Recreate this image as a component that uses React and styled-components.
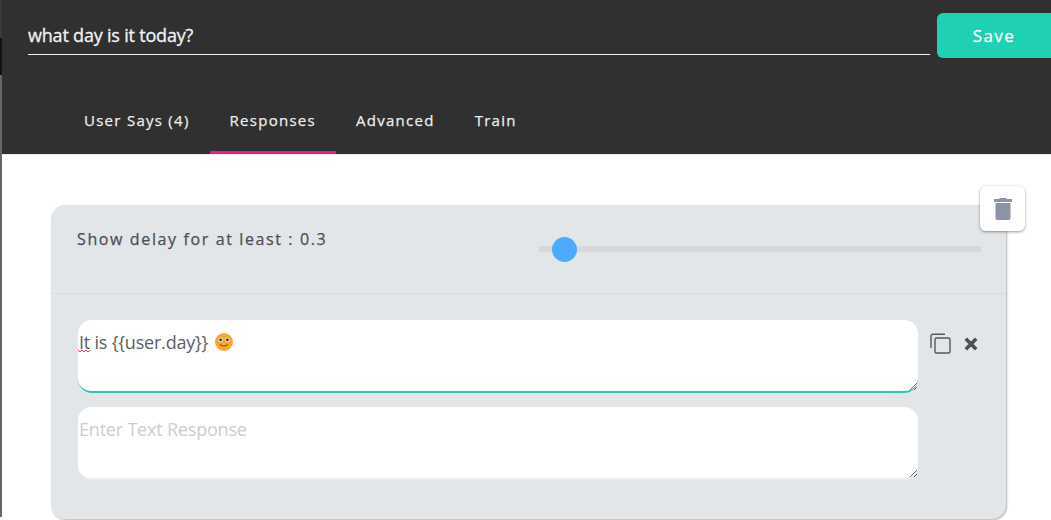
import React from "react";
import styled, { createGlobalStyle } from "styled-components";

const Global = createGlobalStyle`
  html, body {
    margin: 0;
    padding: 0;
    background: #fff;
    overflow: hidden;
  }
  body {
    font-family: "Open Sans", "Noto Sans", sans-serif;
  }
  * {
    box-sizing: border-box;
  }
`;

const Page = styled.div`
  width: 1051px;
  height: 520px;
  display: flex;
  overflow: hidden;
`;
const Gutter = styled.div`
  width: 2px;
  flex: none;
  background: linear-gradient(
    to bottom,
    #3a3a3a 0,
    #3a3a3a 38px,
    #141414 38px,
    #141414 75px,
    #666 75px,
    #666 517px,
    #fff 517px
  );
`;
const Main = styled.div`
  flex: 1;
  min-width: 0;
`;
const Header = styled.header`
  height: 155px;
  background: #303030;
  display: flex;
  flex-direction: column;
  border-bottom: 1px solid #e6e6e6;
`;
const TitleRow = styled.div`
  display: flex;
  align-items: flex-start;
  gap: 7px;
  padding: 13px 0 0 26px;
`;
const TitleInput = styled.input`
  width: 902px;
  height: 42px;
  padding: 2px 0 0;
  background: transparent;
  border: none;
  border-bottom: 1px solid #f0f0f0;
  outline: none;
  color: #f2f2f2;
  font-family: inherit;
  font-size: 18px;
  letter-spacing: -0.2px;
  -webkit-text-stroke: 0.3px #f2f2f2;
`;
const SaveButton = styled.button`
  width: 114px;
  height: 45px;
  flex: none;
  border: none;
  border-radius: 6px 0 0 6px;
  background: #20d0b2;
  color: #fff;
  font-family: inherit;
  font-size: 17px;
  letter-spacing: 1.4px;
  -webkit-text-stroke: 0.3px #fff;
`;
const Tabs = styled.nav`
  display: flex;
  margin-top: auto;
  padding-left: 62px;
`;
const Tab = styled.div`
  height: 58px;
  padding: 0 20px 8px;
  display: flex;
  align-items: center;
  color: #eeeeee;
  font-size: 15px;
  letter-spacing: 1.27px;
  -webkit-text-stroke: 0.25px #eeeeee;
  border-bottom: 3px solid ${(p) => (p.$active ? "#e91e8c" : "transparent")};
`;
const Content = styled.div`
  padding: 50px 0 0 49px;
`;
const Card = styled.section`
  position: relative;
  width: 955px;
  height: 314px;
  background: #e3e6e9;
  border-radius: 14px;
  box-shadow: 1px 1px 2px rgba(0, 0, 0, 0.3);
`;
const DeleteButton = styled.button`
  position: absolute;
  top: -19px;
  right: -19px;
  width: 45px;
  height: 45px;
  padding: 0;
  display: flex;
  align-items: center;
  justify-content: center;
  border: none;
  border-radius: 6px;
  background: #fff;
  box-shadow: 0 1px 3px rgba(0, 0, 0, 0.4);
`;
const DelayRow = styled.div`
  height: 89px;
  padding: 24px 25px 0 26px;
  display: flex;
  justify-content: space-between;
  border-bottom: 1px solid #d8dbde;
`;
const DelayLabel = styled.div`
  color: #4c4f53;
  font-size: 16px;
  letter-spacing: 1.62px;
  line-height: 20px;
  -webkit-text-stroke: 0.25px #4c4f53;
`;
const SliderTrack = styled.div`
  position: relative;
  width: 442px;
  height: 6px;
  margin-top: 17px;
  background: #d6d8da;
`;
const SliderThumb = styled.div`
  position: absolute;
  top: -9px;
  left: 13px;
  width: 25px;
  height: 25px;
  border-radius: 50%;
  background: #4dabff;
`;
const Responses = styled.div`
  padding: 26px 0 0 27px;
  display: flex;
  flex-direction: column;
  gap: 14px;
`;
const ResponseRow = styled.div`
  display: flex;
  align-items: flex-start;
`;
const ResponseField = styled.div`
  position: relative;
  display: flex;
`;
const ResponseBox = styled.textarea`
  width: 840px;
  height: 73px;
  padding: 10px 0 0 1px;
  border: none;
  border-bottom: 2px solid ${(p) => (p.$focused ? "#2fc4b4" : "#eeeeee")};
  border-radius: 14px;
  outline: none;
  background: #fff;
  color: #5c5f63;
  font-family: inherit;
  font-size: 18px;
  letter-spacing: -0.2px;
  resize: both;
  &::placeholder {
    color: #ccced0;
    opacity: 1;
  }
`;
const Squiggle = styled.svg`
  position: absolute;
  top: 29px;
  left: 0;
`;
const Emoji = styled.svg`
  position: absolute;
  top: 13px;
  left: 137px;
`;
const RowActions = styled.div`
  display: flex;
  align-items: center;
  gap: 13px;
  padding: 13px 0 0 12px;
`;
const IconButton = styled.span`
  display: flex;
  color: #55585c;
`;

function TrashIcon() {
  return (
    <svg width="18" height="22" viewBox="0 0 18 22">
      <path
        fill="#8c93a5"
        d="M6 0h6l1 1h5v3H0V1h5zM1.5 5h15v15a2 2 0 0 1-2 2h-11a2 2 0 0 1-2-2z"
      />
    </svg>
  );
}

function CopyIcon() {
  return (
    <svg width="21" height="21" viewBox="0 0 21 21" fill="none" stroke="#55585c" strokeWidth="1.4">
      <path d="M15 1.2H3a2 2 0 0 0-2 2V15" />
      <rect x="5" y="5" width="15" height="15" rx="1.5" />
    </svg>
  );
}

function CloseIcon() {
  return (
    <svg width="14" height="14" viewBox="0 0 14 14" fill="none" stroke="#4c4f53" strokeWidth="3.6">
      <path d="M1.8 1.8l10.4 10.4M12.2 1.8L1.8 12.2" />
    </svg>
  );
}

function SmileEmoji() {
  return (
    <Emoji width="18" height="18" viewBox="0 0 18 18">
      <circle cx="9" cy="9" r="9" fill="#f9a72b" />
      <circle cx="5.6" cy="6.8" r="2.4" fill="#f4e3c4" />
      <circle cx="12.4" cy="6.8" r="2.4" fill="#f4e3c4" />
      <circle cx="5.6" cy="6.8" r="1.4" fill="#3a3330" />
      <circle cx="12.4" cy="6.8" r="1.4" fill="#3a3330" />
      <path d="M5 11.5c1.6 2 6.4 2 8 0" fill="none" stroke="#6b4a1e" strokeWidth="1.1" />
    </Emoji>
  );
}

function SpellSquiggle() {
  return (
    <Squiggle width="12" height="4" viewBox="0 0 12 4">
      <path d="M0 1l2 2 2-2 2 2 2-2 2 2 2-2" fill="none" stroke="#e8382f" strokeWidth="1" />
    </Squiggle>
  );
}

export default function App() {
  return (
    <Page>
      <Global />
      <Gutter />
      <Main>
        <Header>
          <TitleRow>
            <TitleInput defaultValue="what day is it today?" spellCheck={false} />
            <SaveButton>Save</SaveButton>
          </TitleRow>
          <Tabs>
            <Tab>User Says (4)</Tab>
            <Tab $active>Responses</Tab>
            <Tab>Advanced</Tab>
            <Tab>Train</Tab>
          </Tabs>
        </Header>
        <Content>
          <Card>
            <DeleteButton>
              <TrashIcon />
            </DeleteButton>
            <DelayRow>
              <DelayLabel>Show delay for at least : 0.3</DelayLabel>
              <SliderTrack>
                <SliderThumb />
              </SliderTrack>
            </DelayRow>
            <Responses>
              <ResponseRow>
                <ResponseField>
                  <ResponseBox $focused spellCheck={false} defaultValue="It is {{user.day}}" />
                  <SpellSquiggle />
                  <SmileEmoji />
                </ResponseField>
                <RowActions>
                  <IconButton>
                    <CopyIcon />
                  </IconButton>
                  <IconButton>
                    <CloseIcon />
                  </IconButton>
                </RowActions>
              </ResponseRow>
              <ResponseRow>
                <ResponseField>
                  <ResponseBox placeholder="Enter Text Response" spellCheck={false} />
                </ResponseField>
              </ResponseRow>
            </Responses>
          </Card>
        </Content>
      </Main>
    </Page>
  );
}
